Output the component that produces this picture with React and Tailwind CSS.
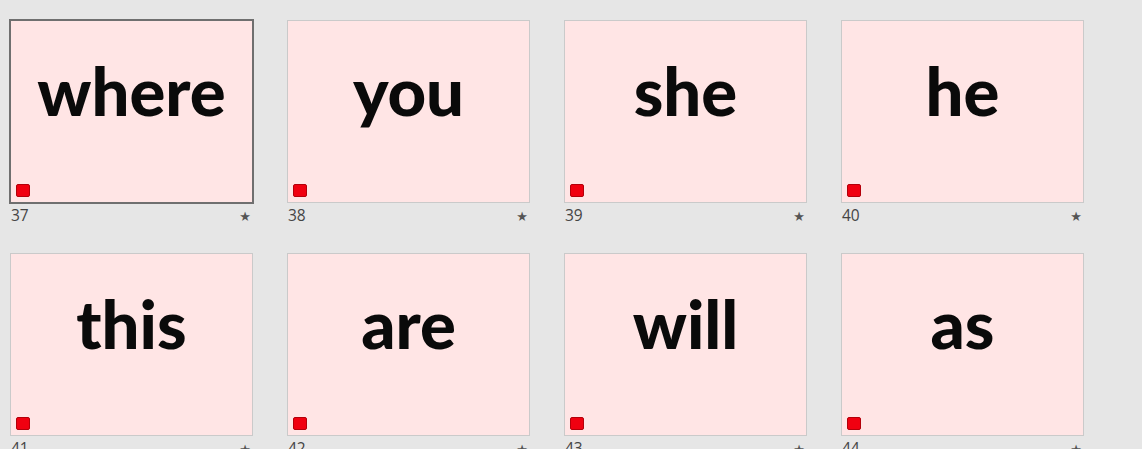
// Slide sorter view - sight word cards 37-44

const slides = [
  { n: 37, word: 'where', selected: true },
  { n: 38, word: 'you' },
  { n: 39, word: 'she' },
  { n: 40, word: 'he' },
  { n: 41, word: 'this' },
  { n: 42, word: 'are' },
  { n: 43, word: 'will' },
  { n: 44, word: 'as' },
];

const SlideThumb = ({ n, word, selected }) => (
  <div className="flex flex-col">
    <div
      className={
        selected
          ? 'relative h-[183px] w-[243px] border border-[#6f6f6f] bg-[#ffe5e5] outline outline-[#6f6f6f]'
          : 'relative h-[183px] w-[243px] border border-[#cacaca] bg-[#ffe5e5]'
      }
    >
      <p className="pt-[36px] text-center font-['Lato',sans-serif] text-[67px] font-black leading-none text-[#0a0a0a]">
        {word}
      </p>
      <span className="absolute bottom-[5px] left-[5px] h-[13px] w-[14px] rounded-[2px] border border-[#b3000a] bg-[#f00010]" />
    </div>
    <div className="flex h-[20px] items-start justify-between pl-px pr-[2px] pt-[5px] font-['Open_Sans',sans-serif] text-[15.5px] leading-none text-[#444]">
      <span>{n}</span>
      <span className="pt-[2px] font-['DejaVu_Sans',sans-serif] text-[13px] text-[#555]">★</span>
    </div>
  </div>
);

const App = () => (
  <div className="h-[449px] w-[1142px] overflow-hidden bg-[#e6e6e6] pl-[10px] pt-[20px]">
    <div className="grid grid-cols-[repeat(4,243px)] gap-x-[34px] gap-y-[30px]">
      {slides.map((s) => (
        <SlideThumb key={s.n} {...s} />
      ))}
    </div>
  </div>
);

export default App;
